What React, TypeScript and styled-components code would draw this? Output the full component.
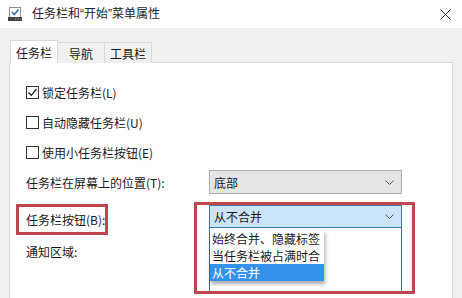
import React from 'react'
import styled, { createGlobalStyle } from 'styled-components'

const GlobalStyle = createGlobalStyle`
  html, body {
    margin: 0;
    padding: 0;
    background: #f0f0f0;
  }
  body {
    font-family: 'Noto Sans CJK SC', 'Microsoft YaHei', sans-serif;
    font-size: 12px;
    color: #1a1a1a;
  }
`

const Window = styled.div`
  width: 462px;
  height: 298px;
  overflow: hidden;
  display: flex;
  flex-direction: column;
  background: #f0f0f0;
`

const TitleBar = styled.div`
  height: 28px;
  background: #fff;
  display: flex;
  align-items: center;
  padding: 0 10px 0 8px;
  flex-shrink: 0;
`

const TitleText = styled.span`
  margin-left: 10px;
  flex: 1;
  line-height: 16px;
  color: #222;
  font-family: 'Liberation Sans', 'Noto Sans CJK SC', sans-serif;
`

const CloseButton = styled.div`
  width: 14px;
  height: 14px;
  display: flex;
  align-items: center;
  justify-content: center;
`

const TabStrip = styled.div`
  height: 34px;
  display: flex;
  align-items: flex-end;
  padding-left: 10px;
  flex-shrink: 0;
`

const Tab = styled.div<{ $active?: boolean }>`
  width: ${({ $active }) => ($active ? 48 : 47)}px;
  height: ${({ $active }) => ($active ? 23 : 21)}px;
  box-sizing: border-box;
  border: 1px solid #d9d9d9;
  border-bottom: none;
  border-left: ${({ $active }) => ($active ? '1px solid #d9d9d9' : 'none')};
  background: ${({ $active }) => ($active ? '#fff' : '#f0f0f0')};
  display: flex;
  align-items: center;
  justify-content: center;
  margin-bottom: -1px;
  position: relative;
  z-index: ${({ $active }) => ($active ? 2 : 1)};
  padding-top: ${({ $active }) => ($active ? 0 : 1)}px;
`

const Panel = styled.div`
  flex: 1;
  margin: 0 9px 0 9px;
  background: #fff;
  border: 1px solid #d9d9d9;
  border-bottom: none;
  padding: 14px 0 0 16px;
  display: flex;
  flex-direction: column;
`

const CheckRow = styled.label`
  height: 30px;
  display: flex;
  align-items: center;
  gap: 3px;
`

const Box = styled.span`
  width: 13px;
  height: 13px;
  box-sizing: border-box;
  border: 1px solid #333;
  background: #fff;
  display: flex;
  align-items: center;
  justify-content: center;
`

const FieldRow = styled.div`
  height: 30px;
  display: flex;
  align-items: center;
`

const FieldLabel = styled.span`
  width: 183px;
`

const Combo = styled.div<{ $open?: boolean }>`
  width: 193px;
  height: ${({ $open }) => ($open ? 23 : 24)}px;
  box-sizing: border-box;
  border: 1px solid ${({ $open }) => ($open ? '#3a7cac' : '#adadad')};
  background: ${({ $open }) => ($open ? '#cce4f7' : '#e5e5e5')};
  display: flex;
  align-items: center;
  justify-content: space-between;
  padding: 0 7px 0 4px;
`

const Lower = styled.div`
  display: flex;
  margin-left: -10px;
  margin-top: 5px;
`

const LeftCol = styled.div`
  width: 178px;
  display: flex;
  flex-direction: column;
`

const RedLabel = styled.div`
  width: 92px;
  height: 31px;
  box-sizing: border-box;
  border: 3px solid #c0454f;
  margin-top: 2px;
  padding-left: 7px;
  display: flex;
  align-items: center;
  white-space: nowrap;
`

const PlainLabel = styled.div`
  margin-top: 9px;
  padding-left: 10px;
  line-height: 16px;
`

const RedBox = styled.div`
  width: 221px;
  height: 92px;
  box-sizing: border-box;
  border: 3px solid #c0454f;
  padding-left: 12px;
  overflow: hidden;
`

const ListBox = styled.div`
  width: 193px;
  height: 70px;
  box-sizing: border-box;
  border-left: 1px solid #3a6c8c;
  border-right: 1px solid #3a6c8c;
  background: #fff;
  padding-top: 2px;
`

const Items = styled.div`
  width: 114px;
  overflow: hidden;
  box-shadow: 1px 3px 4px rgba(0, 0, 0, 0.35);
`

const Item = styled.div<{ $selected?: boolean }>`
  height: 17px;
  line-height: 17px;
  white-space: nowrap;
  padding-left: 2px;
  background: ${({ $selected }) => ($selected ? '#3592ea' : '#fff')};
  color: ${({ $selected }) => ($selected ? '#fff' : '#1a1a1a')};
`

const Chevron = () => (
  <svg width="9" height="5" viewBox="0 0 9 5">
    <path d="M0.5 0.5 L4.5 4.5 L8.5 0.5" fill="none" stroke="#555" strokeWidth="1" />
  </svg>
)

const Check = () => (
  <svg width="11" height="11" viewBox="0 0 11 11">
    <path d="M1.5 5.5 L4.3 8.3 L9.5 2" fill="none" stroke="#222" strokeWidth="1.3" />
  </svg>
)

const AppIcon = () => (
  <svg width="14" height="14" viewBox="0 0 14 14">
    <rect x="1.5" y="0.5" width="11" height="10" fill="#fff" stroke="#8a8f96" />
    <path d="M4 5 L6.3 7.5 L10.5 2.5" fill="none" stroke="#2f6fb5" strokeWidth="1.6" />
    <rect x="0" y="10" width="14" height="4" fill="#3b4047" />
    <rect x="7" y="11.5" width="1.5" height="1" fill="#9aa" />
    <rect x="9.5" y="11.5" width="1.5" height="1" fill="#9aa" />
    <rect x="12" y="11.5" width="1" height="1" fill="#9aa" />
  </svg>
)

const CloseIcon = () => (
  <svg width="11" height="11" viewBox="0 0 11 11">
    <path d="M0.5 0.5 L10.5 10.5 M10.5 0.5 L0.5 10.5" stroke="#333" strokeWidth="1" />
  </svg>
)

const checks = [
  { label: '锁定任务栏(L)', checked: true },
  { label: '自动隐藏任务栏(U)', checked: false },
  { label: '使用小任务栏按钮(E)', checked: false },
]

export default function App() {
  return (
    <>
      <GlobalStyle />
      <Window>
        <TitleBar>
          <AppIcon />
          <TitleText>任务栏和“开始”菜单属性</TitleText>
          <CloseButton>
            <CloseIcon />
          </CloseButton>
        </TitleBar>
        <TabStrip>
          <Tab $active>任务栏</Tab>
          <Tab>导航</Tab>
          <Tab>工具栏</Tab>
        </TabStrip>
        <Panel>
          {checks.map((c) => (
            <CheckRow key={c.label}>
              <Box>{c.checked && <Check />}</Box>
              <span>{c.label}</span>
            </CheckRow>
          ))}
          <FieldRow>
            <FieldLabel>任务栏在屏幕上的位置(T):</FieldLabel>
            <Combo>
              <span>底部</span>
              <Chevron />
            </Combo>
          </FieldRow>
          <Lower>
            <LeftCol>
              <RedLabel>任务栏按钮(B):</RedLabel>
              <PlainLabel>通知区域:</PlainLabel>
            </LeftCol>
            <RedBox>
              <Combo $open>
                <span>从不合并</span>
                <Chevron />
              </Combo>
              <ListBox>
                <Items>
                  <Item>始终合并、隐藏标签</Item>
                  <Item>当任务栏被占满时合</Item>
                  <Item $selected>从不合并</Item>
                </Items>
              </ListBox>
            </RedBox>
          </Lower>
        </Panel>
      </Window>
    </>
  )
}
